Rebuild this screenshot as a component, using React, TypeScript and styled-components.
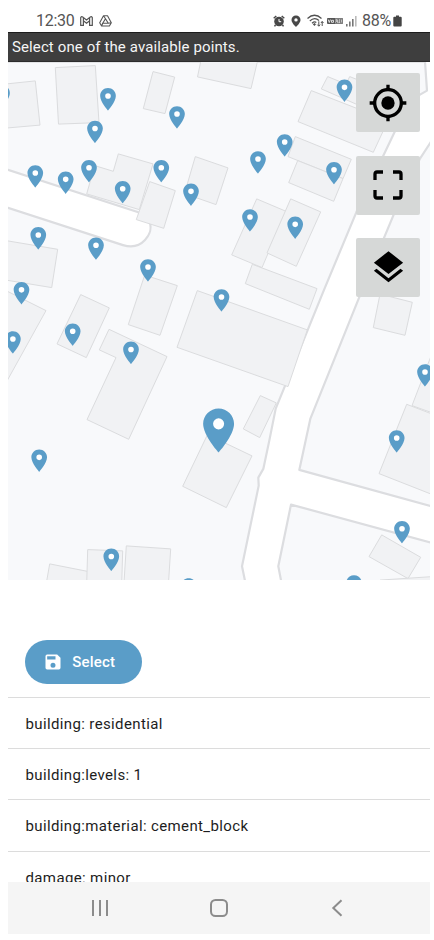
import React from "react";
import styled, { createGlobalStyle } from "styled-components";

const GlobalStyle = createGlobalStyle`
  * { box-sizing: border-box; }
  body { margin: 0; background: #fff; font-family: Roboto, "Liberation Sans", sans-serif; }
`;

const Screen = styled.div`
  width: 434px;
  height: 940px;
  padding: 0 4px 7px 8px;
  display: flex;
  flex-direction: column;
  background: #fff;
  overflow: hidden;
`;

const StatusBar = styled.div`
  flex: 0 0 32px;
  display: flex;
  align-items: center;
  justify-content: space-between;
  padding: 9px 28px 0 28px;
  color: #555;
  font-size: 16px;
  line-height: 22px;
`;

const StatusGroup = styled.div`
  display: flex;
  align-items: center;
`;

const StatusText = styled.span<{ $width: number }>`
  width: ${(p) => p.$width}px;
  white-space: nowrap;
  font-weight: 400;
  letter-spacing: -0.3px;
`;

const BatteryLevel = styled.div`
  display: flex;
  margin-left: 5px;
  margin-right: 1px;
`;

const StatusIcon = styled.svg<{ $gap?: number }>`
  display: block;
  margin-left: ${(p) => p.$gap ?? 0}px;
`;

const Notice = styled.header`
  flex: 0 0 29px;
  padding-left: 4px;
  background: #3e3e3e;
  border-top: 1px solid #1c1c1c;
  border-bottom: 1px solid #2c2c2c;
  color: #f5f5f5;
  font-size: 15px;
  line-height: 28px;
  letter-spacing: 0.11px;
  white-space: nowrap;
`;

const MapPane = styled.section`
  position: relative;
  flex: 0 0 518px;
  overflow: hidden;
`;

const MapCanvas = styled.svg`
  display: block;
  width: 422px;
  height: 519px;
`;

const MapControls = styled.div`
  position: absolute;
  top: 11px;
  right: 10px;
  display: flex;
  flex-direction: column;
  gap: 23.6px;
`;

const MapButton = styled.button`
  width: 64px;
  height: 59px;
  padding: 0;
  border: 0;
  border-radius: 2px;
  background: #d6d8d7;
  display: flex;
  align-items: center;
  justify-content: center;
`;

const Details = styled.section`
  flex: 0 0 302px;
  overflow: hidden;
`;

const ActionArea = styled.div`
  height: 117px;
  padding: 60px 0 0 17.3px;
`;

const SelectButton = styled.button`
  width: 117px;
  height: 44px;
  padding: 0 0 0 18px;
  border: 0;
  border-radius: 22px;
  background: #5a9dc8;
  color: #fff;
  display: flex;
  align-items: center;
  gap: 9px;
  font: 500 15px Roboto, "Liberation Sans", sans-serif;
  letter-spacing: 0.2px;
`;

const TagRow = styled.div`
  height: 51.2px;
  padding: 2px 0 0 17.5px;
  border-top: 1px solid #dcdcdc;
  display: flex;
  align-items: center;
  color: #1d1d1d;
  font-size: 15px;
  letter-spacing: 0.37px;
  white-space: nowrap;
`;

const NavBar = styled.nav`
  flex: 0 0 52px;
  padding: 0 84px 1px 83px;
  background: #f5f5f5;
  display: flex;
  align-items: center;
  justify-content: space-between;
`;

const LAND: string[] = [
  "8,61 425,61 427,90 420,94 412,97 394.5,131.7 356.3,211.7 323.7,290 284.7,386 275.7,408 269.3,440 263.3,468.3 258.3,477 258.7,485 242,565.7 246,585 0,585 0,204.7 8,207.3 123,244.5 C131,247 139,246 145,239.5 C150,234 152,229 149.7,221 L138.3,211.7 8,169.3 0,167 0,55 8,55",
  "440,127 430,142.7 420,158 393.7,214 358.7,298 310.3,418.3 299.3,469.3 440,508",
  "291,504 440,544.4 440,590 283,590 278.3,565.7",
];

const BUILDINGS: string[] = [
  "0,84 35.3,80.3 40,124.5 0,128",
  "55.3,67 95.3,65 99,122 58.5,123.5",
  "153,71 174.7,76.5 165,113 143.3,108",
  "203,50 197.5,76.3 251,88 260,50",
  "327.7,76 346,83.5 349.7,76 375,86 371,110 321.3,88.3",
  "311.3,90 388,120 373.3,151.7 298,121",
  "295.3,136 351.3,158.7 343,178 288,156",
  "297.7,160 343,178 333.7,200.7 288.7,182",
  "256.7,198.3 286,210.7 262,267 231.7,254.3",
  "290.7,198.3 320.7,211.3 296.3,265.7 267,252.3",
  "252.3,263.7 317,288 309.3,308.7 245.3,283",
  "118.3,153.3 153,163.3 139.3,209 86.7,193.3 94.7,165 113.3,170.7",
  "149.7,181 175.3,190 163.7,227.7 136.3,219",
  "195.3,156 228,167.3 216,204 184.5,193",
  "0,239 57.7,248.7 51.7,287 0,278.5",
  "0,287 46,310 0,393",
  "80.7,294 109.3,307.3 86.3,357 57,343.3",
  "144.7,274.5 177.3,285 160,334.7 128.3,324",
  "109,328.7 167,356 128.7,438.7 87,419 116,357 99.3,349.3",
  "197.3,290 307.3,329.3 288,386 177,346.7",
  "260.3,395 276.3,402.3 259.7,437 243.3,428.3",
  "207.5,434 252,455.3 226.3,507 182.7,485.7",
  "380,293.5 412.3,301.7 405,334.7 373.3,327",
  "440,332 412,405 440,415",
  "406.7,403.7 440,416.5 440,497 379,473",
  "381.7,534.3 420.7,556.7 408,578 369,556",
  "380,579.5 440,575.5 440,590 380,590",
  "49.7,563.3 88.7,571 87,590 45,590",
  "87.7,549 122.7,550.3 121.5,590 86.5,590",
  "126.3,545.3 170.7,548.3 168,590 123.5,590",
];

// Each pin is anchored by the coordinates of its tip.
const PINS: [number, number][] = [
  [2, 107], [108, 109.9], [95, 142.5], [177, 128], [344.5, 101.3],
  [35.3, 187], [65.7, 193.3], [89, 181.7], [122.7, 202.7], [161.3, 181.7],
  [191, 205.3], [38.3, 248.9], [96, 259.2], [148, 281], [21.5, 303.8],
  [12.9, 353], [72.7, 345.2], [131, 363.4], [284.7, 156], [258, 173],
  [334, 183.7], [250, 231], [295.2, 238.3], [221.5, 311], [425, 386],
  [396.7, 452], [39.2, 471.3], [111.3, 570.4], [402, 542.7], [354, 597], [188.7, 600],
];

const Pin = ({ x, y, scale = 1.12 }: { x: number; y: number; scale?: number }) => (
  <g transform={`translate(${x} ${y}) scale(${scale})`}>
    <circle cx="0" cy="-13" r="3.2" fill="#fff" />
    <path
      fill="#5a9dc8"
      fillRule="evenodd"
      d="M0-20C-3.87-20-7-16.87-7-13-7-7.75 0 0 0 0S7-7.75 7-13C7-16.87 3.87-20 0-20ZM0-10.5A2.5 2.5 0 1 1 0-15.5 2.5 2.5 0 0 1 0-10.5Z"
    />
  </g>
);

const StreetMap = () => (
  <MapCanvas viewBox="8 61.4 422 519">
    <rect x="8" y="61" width="422" height="520" fill="#fff" />
    {LAND.map((d) => (
      <path key={d} d={`M${d}Z`} fill="#f8f9fb" stroke="#dcdde0" strokeWidth="2.2" strokeLinejoin="round" />
    ))}
    {BUILDINGS.map((points) => (
      <polygon key={points} points={points} fill="#f1f2f4" stroke="#dbdcde" strokeWidth="1" />
    ))}
    {PINS.map(([x, y]) => (
      <Pin key={`${x}-${y}`} x={x} y={y} />
    ))}
    <Pin x={218.6} y={452} scale={2.21} />
  </MapCanvas>
);

const TAGS = ["building: residential", "building:levels: 1", "building:material: cement_block", "damage: minor"];

export default function App() {
  return (
    <>
      <GlobalStyle />
      <Screen>
        <StatusBar>
          <StatusGroup>
            <StatusText $width={44}>12:30</StatusText>
            <StatusIcon width="13" height="10" viewBox="0 0 13 10" fill="none" stroke="#555" strokeWidth="1.2">
              <path d="M.7 1.5Q1.5.3 2.7 1L6.5 4 10.3 1Q11.5.3 12.3 1.5V9.3H9.6V4.8L6.5 7.2 3.4 4.8V9.3H.7ZM3.4 4.8V1.7M9.6 4.8V1.7" />
            </StatusIcon>
            <StatusIcon $gap={6} width="13" height="12" viewBox="0 0 13 12" fill="none" stroke="#555" strokeWidth="1.1" strokeLinejoin="round">
              <path d="M4.5.8h4L12.3 7.7 10.4 11H2.6L.7 7.7ZM6.5 3.7 3.7 8.3h5.6ZM4.5.8l2 2.9M12.3 7.7l-3 .6M2.6 11l1.1-2.7" />
            </StatusIcon>
          </StatusGroup>
          <StatusGroup>
            <StatusIcon width="12" height="12" viewBox="0 0 12 12">
              <circle cx="6" cy="6.5" r="4.8" fill="#484848" />
              <path d="M.7 3.2 3.3 1M11.3 3.2 8.7 1M2.5 10 1.5 11.4M9.5 10l1 1.4" stroke="#484848" strokeWidth="1.5" />
              <path d="M6 4v2.7h2.2" fill="none" stroke="#fff" />
            </StatusIcon>
            <StatusIcon $gap={6} width="10" height="12" viewBox="-5 -12 10 12">
              <path fill="#484848" fillRule="evenodd" d="M0-11.5A4.4 4.4 0 0 0-4.5-7C-4.5-4 0 0 0 0S4.5-4 4.5-7A4.4 4.4 0 0 0 0-11.5ZM0-5.4A1.7 1.7 0 1 1 0-8.8 1.7 1.7 0 0 1 0-5.4Z" />
            </StatusIcon>
            <StatusIcon $gap={6} width="17" height="13" viewBox="0 0 17 13" fill="none" stroke="#505050" strokeWidth="1.2">
              <path d="M.5 4.5Q7.5-2 14.5 4.5M2.8 7Q7.5 2.5 12 6.5M5 9.2Q7.5 7 9.3 8.5" />
              <path d="M7.5 12 5.8 10.2 7.5 9 9 10.2Z" fill="#505050" stroke="none" />
              <path d="M11.8 7.3v4.8M10.3 10.6l1.5 1.6 1.4-1.6M15.2 12V7.5M13.9 9l1.3-1.5L16.5 9" strokeWidth="1" />
            </StatusIcon>
            <StatusIcon $gap={3} width="16" height="8" viewBox="0 0 16 8">
              <rect y="1" width="16" height="6" rx="1" fill="#555" />
              <rect x="8" y="1.7" width="7.3" height="4.6" fill="#ddd" />
              <path d="M1.2 2.5 2.3 5.5 3.4 2.5M4.5 3.3h2v2h-2Z" fill="none" stroke="#fff" strokeWidth=".8" />
              <path d="M8.8 2v3.5h1.5M10.3 2.6h2M11.3 2.6v3M14.7 2.6h-1.5v2.8h1.5M13.2 4h1.2" fill="none" stroke="#555" strokeWidth=".8" />
            </StatusIcon>
            <StatusIcon $gap={3} width="11" height="12" viewBox="0 0 11 12">
              <path d="M0 9h1.6v2.5H0ZM3 6.5h1.6v5H3ZM6 4h1.6v7.5H6Z" fill="#777" />
              <path d="M9 1h1.6v10.5H9Z" fill="#bbb" />
            </StatusIcon>
            <BatteryLevel>
              <StatusText $width={30}>88%</StatusText>
            </BatteryLevel>
            <StatusIcon width="9" height="12" viewBox="0 0 9 12">
              <path d="M3 .5h3v1.3h1.7q1 0 1 1v7.7q0 1-1 1H1.3q-1 0-1-1V2.8q0-1 1-1H3Z" fill="#444" />
            </StatusIcon>
          </StatusGroup>
        </StatusBar>
        <Notice>Select one of the available points.</Notice>
        <MapPane>
          <StreetMap />
          <MapControls>
            <MapButton aria-label="Locate">
              <svg width="40" height="40" viewBox="0 0 24 24">
                <circle cx="12" cy="12" r="4" />
                <path d="M20.94 11A8.99 8.99 0 0 0 13 3.06V1h-2v2.06A8.99 8.99 0 0 0 3.06 11H1v2h2.06A8.99 8.99 0 0 0 11 20.94V23h2v-2.06A8.99 8.99 0 0 0 20.94 13H23v-2h-2.06zM12 19a7 7 0 1 1 0-14 7 7 0 0 1 0 14z" />
              </svg>
            </MapButton>
            <MapButton aria-label="Fit to screen">
              <svg width="30" height="30" viewBox="0 0 30 30" fill="none" stroke="#000" strokeWidth="3.3">
                <path d="M2 10V4Q2 2 4 2h6M20 2h6q2 0 2 2v6M28 20v6q0 2-2 2h-6M10 28H4q-2 0-2-2v-6" />
              </svg>
            </MapButton>
            <MapButton aria-label="Layers">
              <svg width="39" height="39" viewBox="0 0 24 24">
                <path d="m11.99 18.54-7.37-5.73L3 14.07l9 7 9-7-1.63-1.27-7.38 5.74zM12 16l7.36-5.73L21 9l-9-7-9 7 1.63 1.27L12 16z" />
              </svg>
            </MapButton>
          </MapControls>
        </MapPane>
        <Details>
          <ActionArea>
            <SelectButton>
              <svg width="20" height="20" viewBox="0 0 24 24" fill="#fff">
                <path d="M17 3H5a2 2 0 0 0-2 2v14a2 2 0 0 0 2 2h14a2 2 0 0 0 2-2V7l-4-4zm-5 16a3 3 0 1 1 0-6 3 3 0 0 1 0 6zm3-10H5V5h10v4z" />
              </svg>
              Select
            </SelectButton>
          </ActionArea>
          {TAGS.map((tag) => (
            <TagRow key={tag}>{tag}</TagRow>
          ))}
        </Details>
        <NavBar>
          <svg width="18" height="18" viewBox="0 0 18 18" stroke="#8c8c8c" strokeWidth="2">
            <path d="M2 1v16M9 1v16M16 1v16" />
          </svg>
          <svg width="18" height="18" viewBox="0 0 18 18" fill="none" stroke="#8c8c8c" strokeWidth="2">
            <rect x="1" y="1" width="16" height="16" rx="4.5" />
          </svg>
          <svg width="18" height="18" viewBox="0 0 18 18" fill="none" stroke="#8c8c8c" strokeWidth="2">
            <path d="M13.5 1.2 5.3 9l8.2 7.8" />
          </svg>
        </NavBar>
      </Screen>
    </>
  );
}
